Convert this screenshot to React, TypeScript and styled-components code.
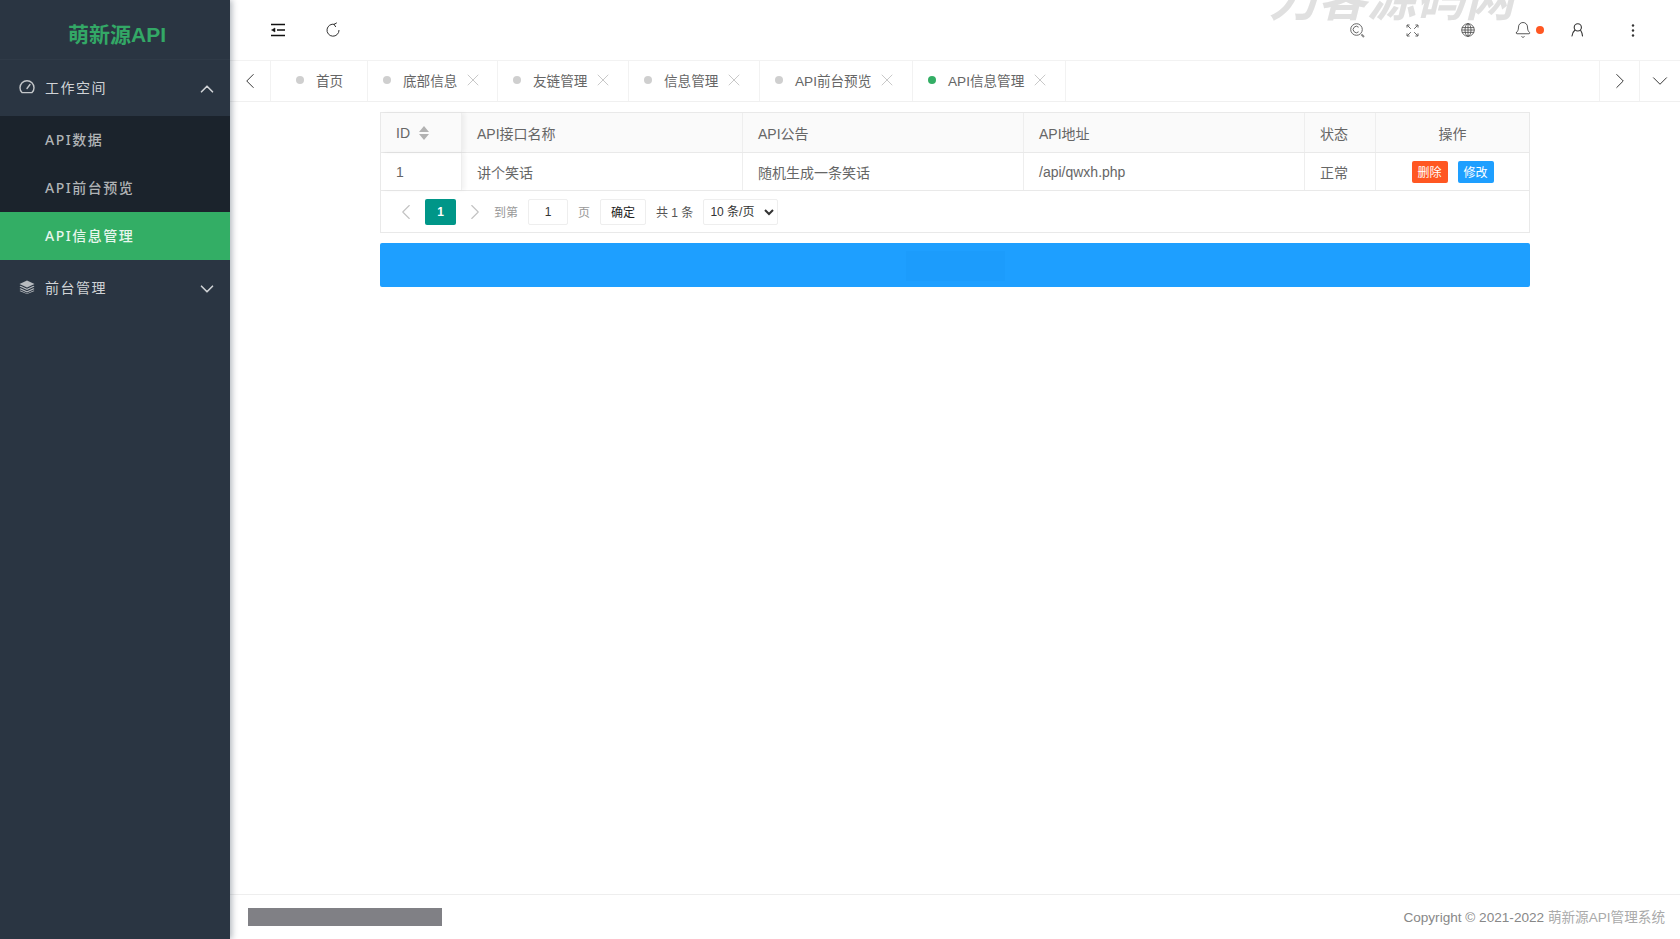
import * as React from "react";
import styled, { createGlobalStyle } from "styled-components";
import { ChevronDown, ChevronLeft, ChevronRight, ChevronUp, X, Bell } from "lucide-react";

const tabs = [
  { label: "首页", width: 97, inset: 25, closable: false, active: false },
  { label: "底部信息", width: 130, inset: 15, closable: true, active: false },
  { label: "友链管理", width: 131, inset: 15, closable: true, active: false },
  { label: "信息管理", width: 131, inset: 15, closable: true, active: false },
  { label: "API前台预览", width: 153, inset: 15, closable: true, active: false },
  { label: "API信息管理", width: 153, inset: 15, closable: true, active: true },
];

const columns = [
  { key: "name", label: "API接口名称", width: 281, value: "讲个笑话" },
  { key: "notice", label: "API公告", width: 281, value: "随机生成一条笑话" },
  { key: "url", label: "API地址", width: 281, value: "/api/qwxh.php" },
  { key: "status", label: "状态", width: 71, value: "正常" },
];

const GaugeIcon = () => (
  <svg width="16" height="14" viewBox="0 0 16 14" fill="none" stroke="#c4c7ca" strokeWidth="1.4">
    <path d="M3 12.6A7 7 0 1 1 13 12.6Z" strokeLinejoin="round" />
    <path d="M8 8.5l3-4" strokeLinecap="round" />
  </svg>
);

const StackIcon = () => (
  <svg width="16" height="14" viewBox="0 0 16 14" fill="#b8bcc0">
    <path d="M8 0.5L15.5 4 8 7.5 0.5 4z" />
    <path d="M1.6 5.8L8 8.8l6.4-3 1.1 0.8L8 10 0.5 6.6z" />
    <path d="M1.6 8.2L8 11.2l6.4-3 1.1 0.8L8 12.4 0.5 9z" />
    <path d="M1.6 10.4L8 13.4l6.4-3 1.1 0.6L8 14 0.5 11z" />
  </svg>
);

const IndentIcon = () => (
  <svg width="16" height="14" viewBox="0 0 16 14" fill="none" stroke="#111" strokeWidth="1.6">
    <path d="M1 1.5h14M7 7h8M1 12.5h14" />
    <path d="M5 5v4L1.5 7z" fill="#111" strokeWidth="0.5" />
  </svg>
);

const RefreshIcon = () => (
  <svg width="16" height="16" viewBox="0 0 16 16" fill="none" stroke="#333" strokeWidth="1">
    <path d="M9.6 2.4A6 6 0 1 0 14 8" />
    <path d="M11.8 0.8L9 2.4l1.8 2.6" />
  </svg>
);

const SearchIcon = () => (
  <svg width="15" height="15" viewBox="0 0 15 15" fill="none" stroke="#666" strokeWidth="1">
    <circle cx="6.5" cy="6.5" r="5.8" />
    <path d="M8.6 4.2A3.2 3.2 0 1 0 8.6 8.8" />
    <path d="M11.4 11.4l2.6 2.6" strokeWidth="2" stroke="#888" />
  </svg>
);

const ExpandIcon = () => (
  <svg width="13" height="13" viewBox="0 0 13 13" fill="none" stroke="#666" strokeWidth="1">
    <path d="M4.8 4.8L1 1M1 3.6V1h2.6M8.2 4.8L12 1M9.4 1H12v2.6M4.8 8.2L1 12M1 9.4V12h2.6M8.2 8.2L12 12M12 9.4V12H9.4" />
  </svg>
);

const GlobeIcon = () => (
  <svg width="14" height="14" viewBox="0 0 14 14" fill="none" stroke="#444" strokeWidth="0.8">
    <circle cx="7" cy="7" r="6.3" />
    <ellipse cx="7" cy="7" rx="3" ry="6.3" />
    <path d="M7 0.7v12.6M1 4.6h12M0.7 7h12.6M1 9.4h12" />
  </svg>
);

const UserIcon = () => (
  <svg width="13" height="14" viewBox="0 0 13 14" fill="none" stroke="#333" strokeWidth="1.1">
    <circle cx="6.8" cy="4.4" r="3.6" />
    <path d="M4 7C2.2 8.4 1.4 10.6 1 13M9.6 7.2c1 1.4 1.6 3.6 1.9 5.8" strokeLinecap="round" />
  </svg>
);

const KebabIcon = () => (
  <svg width="4" height="13" viewBox="0 0 4 13" fill="#333">
    <circle cx="2" cy="1.5" r="1.2" />
    <circle cx="2" cy="6.5" r="1.2" />
    <circle cx="2" cy="11.5" r="1.2" />
  </svg>
);

export default function App() {
  return (
    <Page>
      <GlobalStyle />
      <Sidebar>
        <Logo>萌新源API</Logo>
        <MenuHead>
          <GaugeIcon />
          <MenuLabel>工作空间</MenuLabel>
          <ChevronUp size={22} strokeWidth={1.8} />
        </MenuHead>
        <SubMenu>
          <SubItem>API数据</SubItem>
          <SubItem>API前台预览</SubItem>
          <SubItem $active>API信息管理</SubItem>
        </SubMenu>
        <MenuHead>
          <StackIcon />
          <MenuLabel>前台管理</MenuLabel>
          <ChevronDown size={22} strokeWidth={1.8} />
        </MenuHead>
      </Sidebar>
      <Main>
        <TopBar>
          <IconCell><IndentIcon /></IconCell>
          <IconCell><RefreshIcon /></IconCell>
          <Spacer />
          <Watermark>刀客源码网</Watermark>
          <IconCell><SearchIcon /></IconCell>
          <IconCell><ExpandIcon /></IconCell>
          <IconCell><GlobeIcon /></IconCell>
          <IconCell>
            <Bell size={18} strokeWidth={1} color="#222" />
            <RedDot />
          </IconCell>
          <IconCell><UserIcon /></IconCell>
          <IconCell><KebabIcon /></IconCell>
        </TopBar>
        <TabBar>
          <ArrowCell $width={41}><ChevronLeft size={26} strokeWidth={0.9} /></ArrowCell>
          {tabs.map(tab => (
            <Tab key={tab.label} $width={tab.width} $inset={tab.inset}>
              <Dot $active={tab.active} />
              <TabLabel>{tab.label}</TabLabel>
              {tab.closable && <X size={20} strokeWidth={0.9} color="#b5b5b5" />}
            </Tab>
          ))}
          <Spacer />
          <ArrowCell $width={40} $left><ChevronRight size={26} strokeWidth={0.9} /></ArrowCell>
          <ArrowCell $width={41} $left><ChevronDown size={26} strokeWidth={0.9} /></ArrowCell>
        </TabBar>
        <Content>
          <TableWrap>
            <HeadRow>
              <IdCell>
                ID
                <SortIcon width="12" height="16" viewBox="0 0 12 16">
                  <path d="M6 1l5 6H1zM6 15L1 9h10z" fill="#b2b2b2" />
                </SortIcon>
              </IdCell>
              {columns.map(col => (
                <DataCell key={col.key} $width={col.width}>{col.label}</DataCell>
              ))}
              <ActionCell>操作</ActionCell>
            </HeadRow>
            <BodyRow>
              <IdCell>1</IdCell>
              {columns.map(col => (
                <DataCell key={col.key} $width={col.width}>{col.value}</DataCell>
              ))}
              <ActionCell>
                <SmallButton $bg="#ff5722">删除</SmallButton>
                <SmallButton $bg="#1e9fff">修改</SmallButton>
              </ActionCell>
            </BodyRow>
            <Pager>
              <PagerArrow><ChevronLeft size={26} strokeWidth={1} /></PagerArrow>
              <PageCurrent>1</PageCurrent>
              <PagerArrow><ChevronRight size={26} strokeWidth={1} /></PagerArrow>
              <PagerText $lead={4}>到第</PagerText>
              <PageInput>1</PageInput>
              <PagerText>页</PagerText>
              <ConfirmButton>确定</ConfirmButton>
              <PagerTotal>共 1 条</PagerTotal>
              <PageSize defaultValue="10">
                <option value="10">10 条/页</option>
              </PageSize>
            </Pager>
          </TableWrap>
          <BlueBar><BlueBarPatch /></BlueBar>
        </Content>
        <Footer>
          <GreyBlock />
          <Copyright>
            Copyright © 2021-2022 <CopyrightName>萌新源API管理系统</CopyrightName>
          </Copyright>
        </Footer>
      </Main>
    </Page>
  );
}

const GlobalStyle = createGlobalStyle`
  html, body, #root {
    margin: 0;
    height: 100%;
  }
  body {
    font-family: "Liberation Sans", "Noto Sans CJK SC", sans-serif;
    font-size: 14px;
    color: #666;
    background: #fff;
    overflow: hidden;
  }
`;

const Page = styled.div`
  display: flex;
  height: 939px;
`;

const Sidebar = styled.aside`
  width: 230px;
  flex-shrink: 0;
  background: #2a3542;
  box-shadow: 2px 0 6px rgba(0, 21, 41, 0.3);
  position: relative;
  z-index: 2;
  font-family: "Noto Sans", "Noto Sans CJK SC", sans-serif;
`;

const Logo = styled.div`
  height: 60px;
  box-sizing: border-box;
  border-bottom: 1px solid #2f3a47;
  padding: 7px 0 0 4px;
  display: flex;
  align-items: center;
  justify-content: center;
  color: #33a866;
  font: bold 21px "Liberation Sans", "Noto Sans CJK SC", sans-serif;
`;

const MenuHead = styled.div`
  height: 56px;
  box-sizing: border-box;
  padding: 0 12px 2px 19px;
  display: flex;
  align-items: center;
  color: #d0d3d6;
  svg:last-child {
    margin-top: 4px;
  }
`;

const MenuLabel = styled.span`
  flex: 1;
  margin-left: 10px;
  font-size: 14px;
  letter-spacing: 1.5px;
`;

const SubMenu = styled.div`
  background: #1b232c;
`;

const SubItem = styled.div<{ $active?: boolean }>`
  height: 48px;
  box-sizing: border-box;
  padding: 0 0 2px 45px;
  display: flex;
  align-items: center;
  font-size: 14px;
  letter-spacing: 1.5px;
  font-weight: 500;
  color: ${p => (p.$active ? "#e8f6ee" : "#b0b3b6")};
  background: ${p => (p.$active ? "#33ae65" : "transparent")};
`;

const Main = styled.main`
  flex: 1;
  min-width: 0;
  display: flex;
  flex-direction: column;
`;

const TopBar = styled.header`
  height: 60px;
  flex-shrink: 0;
  display: flex;
  padding: 0 20px;
  position: relative;
  overflow: hidden;
`;

const Watermark = styled.div`
  position: absolute;
  right: 166px;
  top: -29px;
  font: italic bold 49px "Liberation Sans", "Noto Sans CJK SC", sans-serif;
  line-height: 56px;
  color: #e0e0e0;
  white-space: nowrap;
`;

const IconCell = styled.div`
  width: 55px;
  display: flex;
  align-items: center;
  justify-content: center;
  position: relative;
`;

const RedDot = styled.span`
  position: absolute;
  left: 41px;
  top: 26px;
  width: 8px;
  height: 8px;
  border-radius: 50%;
  background: #ff5722;
`;

const Spacer = styled.div`
  flex: 1;
`;

const TabBar = styled.nav`
  height: 42px;
  flex-shrink: 0;
  box-sizing: border-box;
  display: flex;
  border-top: 1px solid #f2f2f2;
  border-bottom: 1px solid #f0f0f0;
`;

const ArrowCell = styled.div<{ $width: number; $left?: boolean }>`
  width: ${p => p.$width}px;
  flex-shrink: 0;
  box-sizing: border-box;
  display: flex;
  align-items: center;
  justify-content: center;
  color: #333;
  border-right: ${p => (p.$left ? "none" : "1px solid #f2f2f2")};
  border-left: ${p => (p.$left ? "1px solid #f2f2f2" : "none")};
`;

const Tab = styled.div<{ $width: number; $inset: number }>`
  width: ${p => p.$width}px;
  flex-shrink: 0;
  box-sizing: border-box;
  display: flex;
  align-items: center;
  padding: 0 0 2px ${p => p.$inset}px;
  border-right: 1px solid #f2f2f2;
`;

const Dot = styled.span<{ $active: boolean }>`
  width: 8px;
  height: 8px;
  border-radius: 50%;
  background: ${p => (p.$active ? "#33ae65" : "#cfcfcf")};
`;

const TabLabel = styled.span`
  margin: 0 6px 0 12px;
  font-size: 13.6px;
  color: #666;
`;

const Content = styled.section`
  flex: 1;
  padding: 10px 150px 0;
  box-sizing: border-box;
`;

const TableWrap = styled.div`
  width: 1150px;
  box-sizing: border-box;
  border: 1px solid #e9e9e9;
`;

const HeadRow = styled.div`
  display: flex;
  height: 39px;
  background: #fafafa;
  border-bottom: 1px solid #e9e9e9;
`;

const BodyRow = styled.div`
  display: flex;
  height: 38px;
  box-sizing: border-box;
  border-bottom: 1px solid #e9e9e9;
`;

const DataCell = styled.div<{ $width: number }>`
  width: ${p => p.$width}px;
  flex-shrink: 0;
  box-sizing: border-box;
  padding-left: 15px;
  display: flex;
  align-items: center;
  border-right: 1px solid #eee;
`;

const IdCell = styled.div`
  width: 81px;
  flex-shrink: 0;
  box-sizing: border-box;
  padding-left: 15px;
  display: flex;
  align-items: center;
  border-right: 1px solid #eee;
  box-shadow: 3px 0 4px rgba(0, 0, 0, 0.05);
`;

const SortIcon = styled.svg`
  margin-left: 8px;
`;

const ActionCell = styled.div`
  flex: 1;
  display: flex;
  align-items: center;
  justify-content: center;
  gap: 10px;
`;

const SmallButton = styled.span<{ $bg: string }>`
  width: 36px;
  height: 22px;
  border-radius: 2px;
  display: flex;
  align-items: center;
  justify-content: center;
  font-size: 12px;
  color: #fff;
  background: ${p => p.$bg};
`;

const Pager = styled.div`
  height: 41px;
  display: flex;
  align-items: center;
  padding-left: 10px;
  font-size: 12px;
`;

const PagerArrow = styled.span`
  width: 30px;
  display: flex;
  justify-content: center;
  color: #c2c2c2;
`;

const PageCurrent = styled.span`
  width: 31px;
  height: 26px;
  border-radius: 2px;
  background: #009688;
  color: #fff;
  font-weight: bold;
  display: flex;
  align-items: center;
  justify-content: center;
  margin: 0 4px;
`;

const PagerText = styled.span<{ $lead?: number }>`
  color: #999;
  margin: 0 10px 0 ${p => p.$lead ?? 0}px;
`;

const PageInput = styled.span`
  width: 40px;
  height: 26px;
  box-sizing: border-box;
  border: 1px solid #eee;
  border-radius: 2px;
  color: #333;
  display: flex;
  align-items: center;
  justify-content: center;
  margin-right: 10px;
`;

const ConfirmButton = styled.span`
  width: 46px;
  height: 26px;
  box-sizing: border-box;
  border: 1px solid #eee;
  border-radius: 2px;
  color: #222;
  display: flex;
  align-items: center;
  justify-content: center;
`;

const PagerTotal = styled.span`
  color: #555;
  margin: 0 10px;
`;

const PageSize = styled.select`
  width: 75px;
  height: 26px;
  box-sizing: border-box;
  border: 1px solid #eee;
  border-radius: 2px;
  background: #fff;
  color: #333;
  font-size: 12px;
  font-family: inherit;
  padding: 0 2px;
`;

const BlueBar = styled.div`
  width: 1150px;
  height: 44px;
  margin-top: 10px;
  border-radius: 2px;
  background: #1e9fff;
  display: flex;
  align-items: center;
  justify-content: center;
`;

const BlueBarPatch = styled.span`
  width: 99px;
  height: 30px;
  margin-top: 1px;
  background: #1c9cfc;
`;

const Footer = styled.footer`
  height: 45px;
  flex-shrink: 0;
  box-sizing: border-box;
  border-top: 1px solid #eee;
  padding: 0 15px 3px 18px;
  display: flex;
  align-items: center;
  justify-content: space-between;
`;

const GreyBlock = styled.div`
  width: 194px;
  height: 18px;
  margin-top: 3px;
  background: #808085;
`;

const Copyright = styled.div`
  color: #888;
  font-size: 13.6px;
`;

const CopyrightName = styled.span`
  color: #aaa;
`;
